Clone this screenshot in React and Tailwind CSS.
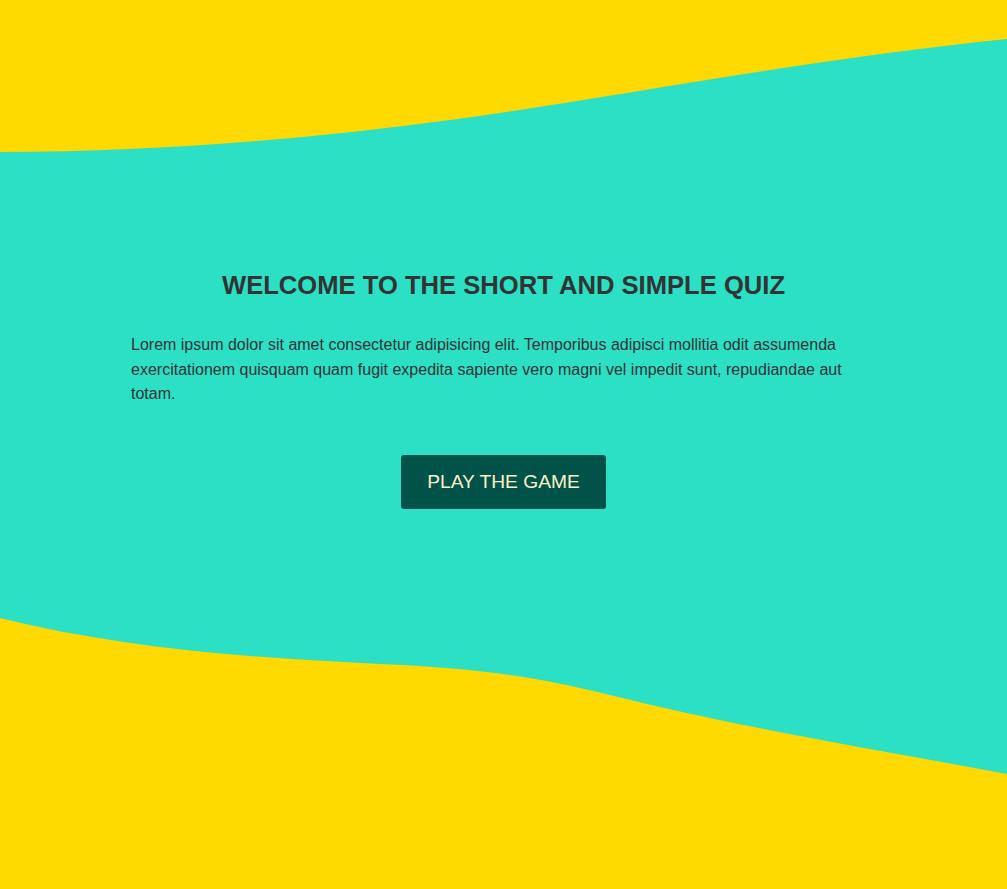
export default function App() {
  return (
    <div
      className="min-h-screen w-full bg-[#FFD900] flex flex-col"
      style={{ fontFamily: '"Liberation Sans", Arial, sans-serif' }}
    >
      <svg
        className="block w-full h-[152px] shrink-0"
        viewBox="0 0 1007 152"
        preserveAspectRatio="none"
      >
        <path
          d="M0,152 C150,152 300,140 450,120 C600,100 800,60 1007,39 L1007,153 L0,153 Z"
          fill="#2BE0C5"
        />
      </svg>
      <section className="bg-[#2BE0C5] h-[466px] shrink-0 flex flex-col items-center pt-[118px]">
        <h1 className="text-[25.6px] leading-[1.2] font-bold text-[#333333] text-center">
          WELCOME TO THE SHORT AND SIMPLE QUIZ
        </h1>
        <p className="w-[745px] mt-[32px] text-[16px] leading-[24.8px] text-[#333333]">
          Lorem ipsum dolor sit amet consectetur adipisicing elit. Temporibus adipisci mollitia odit
          assumenda exercitationem quisquam quam fugit expedita sapiente vero magni vel impedit sunt,
          repudiandae aut totam.
        </p>
        <button className="mt-[48px] bg-[#01534A] text-[#FFF1C6] text-[19.2px] leading-[22px] px-[26px] py-4 rounded-[3px] whitespace-nowrap">
          PLAY THE GAME
        </button>
      </section>
      <svg
        className="block w-full h-[160px] shrink-0"
        viewBox="0 618 1007 160"
        preserveAspectRatio="none"
      >
        <path
          d="M0,617 L0,618 C120,648 250,658 380,664 C470,668 530,675 610,695 C750,730 880,750 1007,774 L1007,617 Z"
          fill="#2BE0C5"
        />
      </svg>
    </div>
  );
}
